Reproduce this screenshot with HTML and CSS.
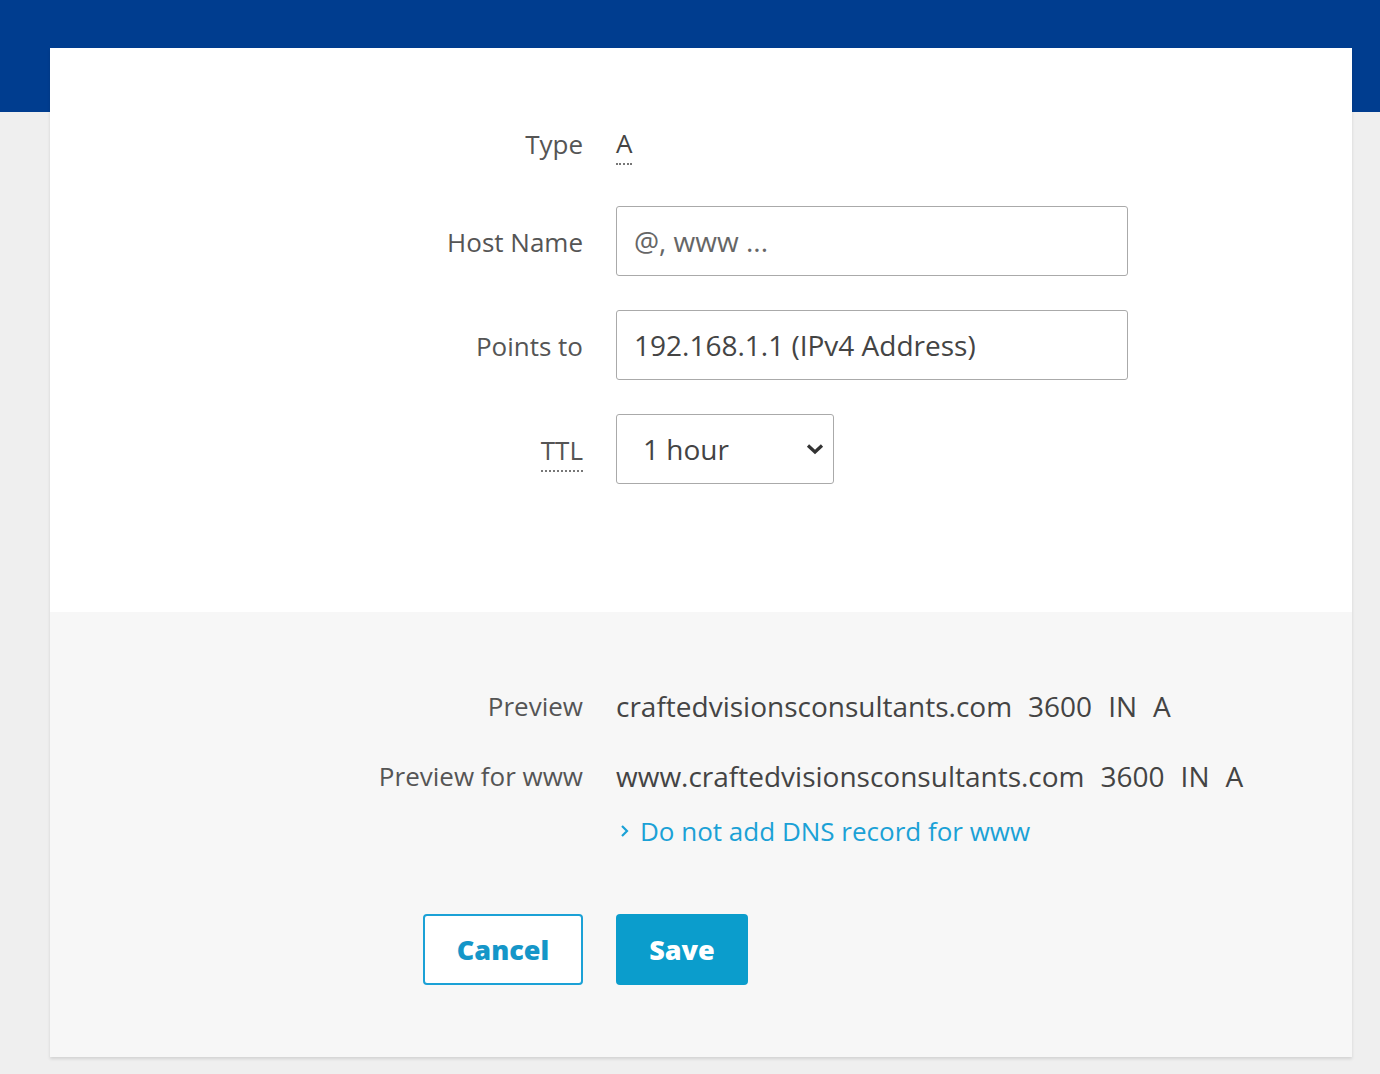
FILE: index.html
```html
<!DOCTYPE html>
<html lang="en">
<head>
    <meta charset="UTF-8">
    <title>Add DNS record</title>
    <link rel="stylesheet" href="styles.css">
</head>
<body>
<div class="topbar"></div>
<div class="card">
    <div class="card-main">
        <div class="row row-type">
            <div class="label">Type</div>
            <div class="value"><abbr class="dotted" title="IPv4 address record">A</abbr></div>
        </div>
        <div class="row">
            <label class="label" for="host">Host Name</label>
            <div class="value"><input id="host" class="field" type="text" placeholder="@, www ..."></div>
        </div>
        <div class="row">
            <label class="label" for="points">Points to</label>
            <div class="value"><input id="points" class="field field-dark" type="text" placeholder="192.168.1.1 (IPv4 Address)"></div>
        </div>
        <div class="row">
            <div class="label"><abbr class="dotted" title="Time to live">TTL</abbr></div>
            <div class="value">
                <div class="select">
                    <span>1 hour</span>
                    <svg width="20" height="12" viewBox="0 0 20 12"><path d="M3 2.5 L10 9 L17 2.5" fill="none" stroke="#333" stroke-width="3.2"/></svg>
                </div>
            </div>
        </div>
    </div>
    <div class="card-foot">
        <div class="prow">
            <div class="label">Preview</div>
            <div class="value preview">
                <span>craftedvisionsconsultants.com</span><span>3600</span><span>IN</span><span>A</span>
            </div>
        </div>
        <div class="prow">
            <div class="label">Preview for www</div>
            <div class="value preview">
                <span>www.craftedvisionsconsultants.com</span><span>3600</span><span>IN</span><span>A</span>
            </div>
        </div>
        <div class="prow">
            <div class="label"></div>
            <div class="value">
                <a href="javascript:void(0);" class="link">
                    <svg width="12" height="16" viewBox="0 0 12 16"><path d="M3 3 L8 8 L3 13" fill="none" stroke="#1ba1d6" stroke-width="2.2"/></svg>
                    Do not add DNS record for www
                </a>
            </div>
        </div>
        <div class="btns">
            <div class="label"><a href="javascript:void(0);" class="btn btn-cancel">Cancel</a></div>
            <div class="value"><a href="javascript:void(0);" class="btn btn-save">Save</a></div>
        </div>
    </div>
</div>
</body>
</html>
```

FILE: styles.css
```css
*{
    margin: 0;
    padding: 0;
    box-sizing: border-box;
}

body{
    background: #efefef;
    font-family: "Open Sans", "Noto Sans", sans-serif;
    font-size: 26px;
    color: #444;
}

.topbar{
    height: 112px;
    background: #003d8f;
}

.card{
    margin: -64px 28px 17px 50px;
    background: #fff;
    box-shadow: 0 2px 3px rgba(0,0,0,0.12);
}

.row, .prow, .btns{
    display: grid;
    grid-template-columns: 533px 1fr;
    column-gap: 33px;
    align-items: center;
}

.label{
    text-align: right;
    color: #555;
}
.row .label{
    padding-top: 2px;
}
.value{
    color: #444;
}

/* white part */
.card-main{
    padding: 66px 0 128px;
    display: flex;
    flex-direction: column;
    gap: 34px;
}
.row-type{
    height: 58px;
}

.dotted{
    text-decoration: none;
    border-bottom: 2px dotted #777;
    padding-bottom: 2px;
}

.field{
    display: block;
    width: 512px;
    height: 70px;
    border: 1px solid #aaa;
    border-radius: 3px;
    padding: 0 17px;
    font-family: inherit;
    font-size: 28px;
    color: #444;
    outline: none;
}
.field::placeholder{
    color: #666;
}
.field-dark::placeholder{
    color: #444;
}

.select{
    width: 218px;
    height: 70px;
    border: 1px solid #aaa;
    border-radius: 3px;
    padding: 0 8px 0 26px;
    display: flex;
    align-items: center;
    justify-content: space-between;
    font-size: 28px;
    color: #444;
}

/* grey part */
.card-foot{
    background: #f7f7f7;
    padding: 77px 0 72px;
}
.prow{
    height: 34px;
    line-height: 34px;
}
.prow + .prow{
    margin-top: 36px;
}
.prow:nth-child(3){
    margin-top: 19px;
}
.preview{
    display: flex;
    gap: 16px;
    white-space: nowrap;
    font-size: 28px;
}

.link{
    color: #1ba1d6;
    text-decoration: none;
    display: inline-flex;
    align-items: center;
    gap: 9px;
    padding-left: 3px;
}

.btns{
    margin-top: 68px;
}
.btns .label{
    display: flex;
    justify-content: flex-end;
}
.btn{
    display: inline-flex;
    align-items: center;
    justify-content: center;
    height: 71px;
    border-radius: 4px;
    font-weight: 800;
    font-size: 27px;
    text-decoration: none;
}
.btn-cancel{
    width: 160px;
    border: 2px solid #1ba1d6;
    color: #1596c8;
    background: #fff;
}
.btn-save{
    width: 132px;
    background: #0b9dcc;
    color: #fff;
}
```
